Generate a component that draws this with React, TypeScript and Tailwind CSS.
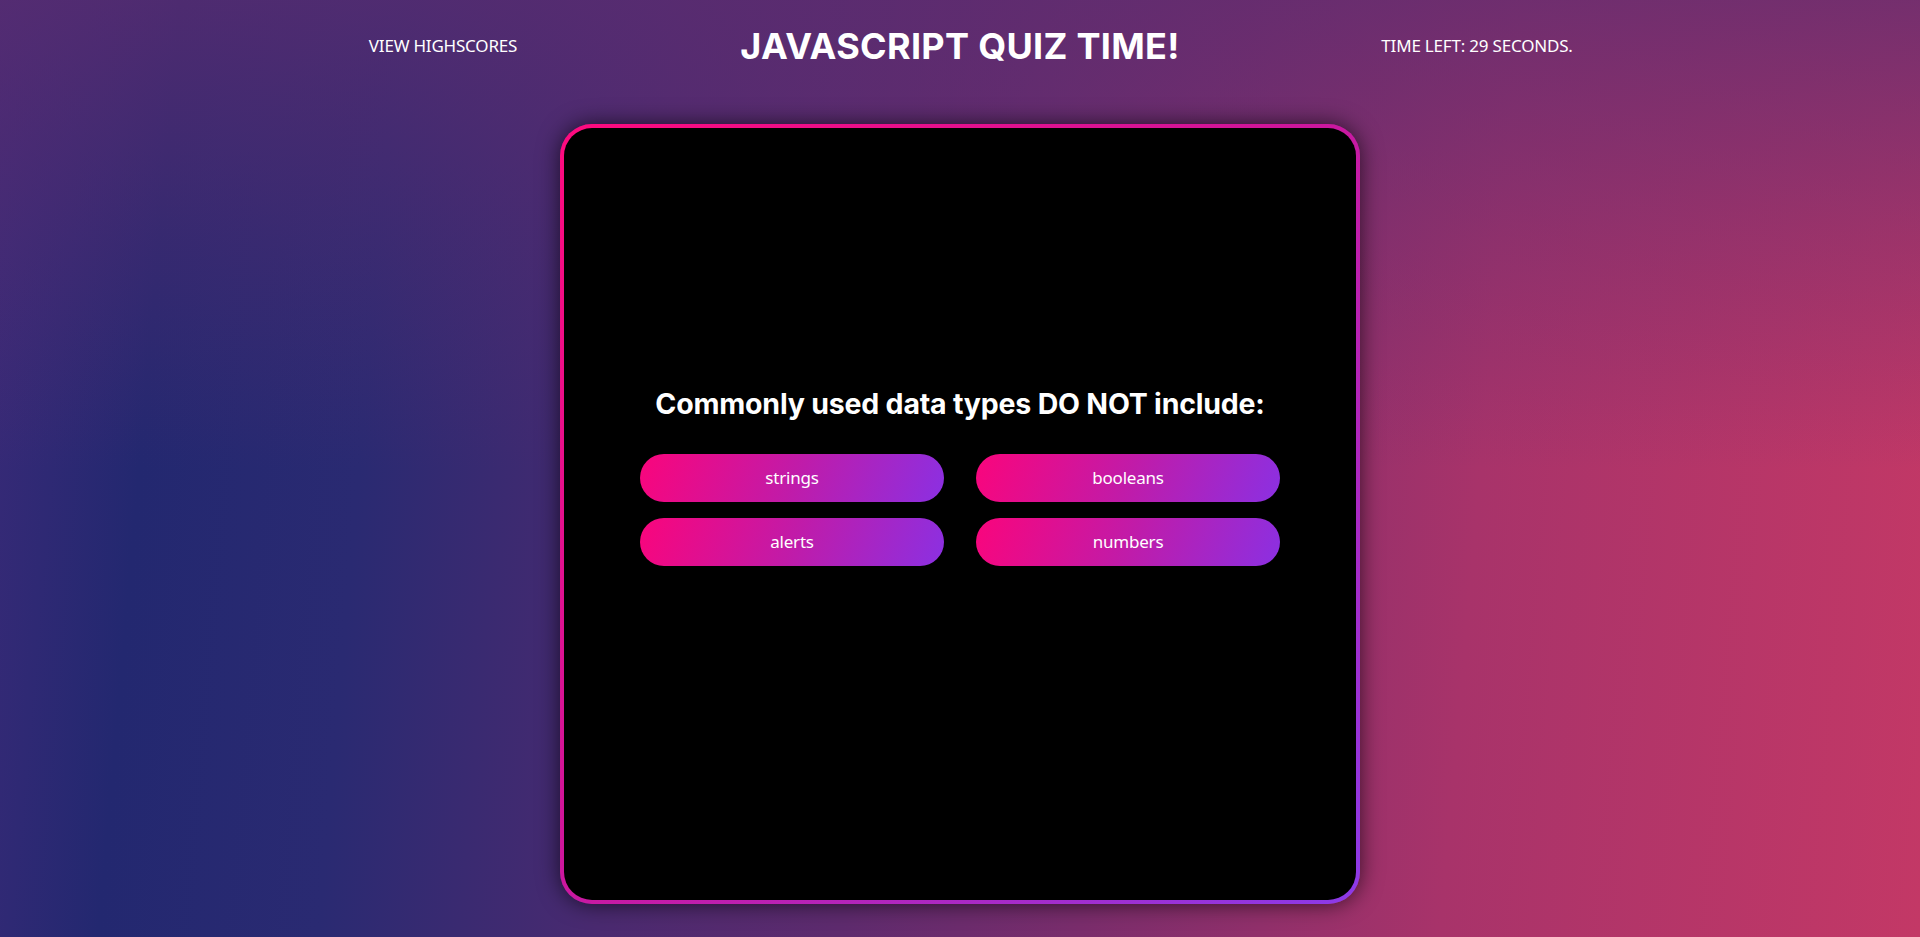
import React from 'react';

const answers = ['strings', 'booleans', 'alerts', 'numbers'];

export default function App() {
  return (
    <div className="h-[937px] w-full overflow-hidden text-white bg-[linear-gradient(180deg,rgba(92,44,112,0.75)_0%,rgba(92,44,112,0.35)_25%,rgba(92,44,112,0)_50%),linear-gradient(95deg,#3a2a78_0%,#232870_9%,#2a2a72_20%,#4a2a70_34%,#5e2b6e_46%,#7a2d6c_58%,#a8336a_76%,#c33866_100%)]">
      <header className="h-[92px] grid grid-cols-[517px_517px_517px] justify-center items-center">
        <a className="text-center text-[17px] font-['Noto_Sans',sans-serif] tracking-[-0.2px] cursor-pointer">
          VIEW HIGHSCORES
        </a>
        <h1 className="text-center text-[36px] font-bold font-['Inter',sans-serif] tracking-[0.3px]">
          JAVASCRIPT QUIZ TIME!
        </h1>
        <p className="text-center text-[17px] font-['Noto_Sans',sans-serif] tracking-[-0.2px]">
          TIME LEFT: 29 SECONDS.
        </p>
      </header>

      <main className="flex justify-center mt-[32px]">
        <div className="w-[800px] h-[780px] p-[4px] rounded-[32px] bg-[linear-gradient(135deg,#ff0a7e_0%,#d0159a_45%,#8b3ae8_100%)] shadow-[0_0_22px_rgba(0,0,0,0.65)]">
          <section className="h-full w-full bg-black rounded-[28px] flex flex-col items-center pt-[255px]">
            <h2 className="text-[28.5px] font-bold font-['Inter',sans-serif] tracking-[-0.2px]">
              Commonly used data types DO NOT include:
            </h2>
            <div className="mt-[28px] grid grid-cols-[304px_304px] gap-x-[32px] gap-y-[16px]">
              {answers.map((a) => (
                <button
                  key={a}
                  className="h-[48px] rounded-full bg-[linear-gradient(110deg,#fa057c_0%,#c11ba8_50%,#8b30e2_100%)] text-[17px] font-['Noto_Sans',sans-serif] tracking-[-0.2px] text-white"
                >
                  {a}
                </button>
              ))}
            </div>
          </section>
        </div>
      </main>
    </div>
  );
}
